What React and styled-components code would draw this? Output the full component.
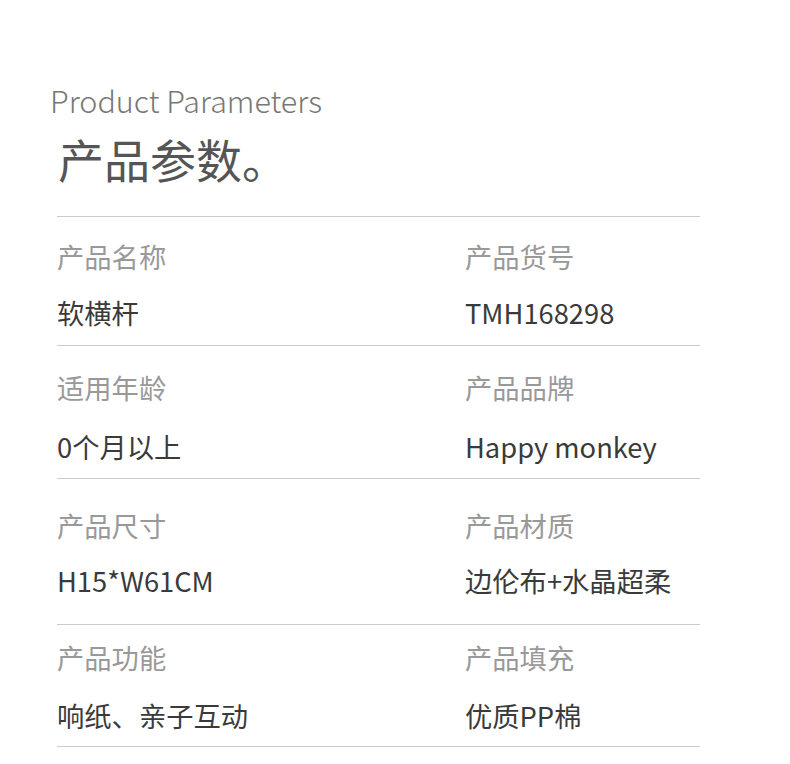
import React from 'react';
import styled, {createGlobalStyle} from "styled-components"

const GlobalStyle = createGlobalStyle`
    body {
        margin: 0;
        background: #fff;
        font-family: "Noto Sans CJK SC", "Noto Sans", sans-serif;
    }
`

const params = [
    {cells: [["产品名称", "软横杆"], ["产品货号", "TMH168298"]], top: 24, gap: 26, bottom: 18},
    {cells: [["适用年龄", "0个月以上"], ["产品品牌", "Happy monkey"]], top: 26, gap: 29, bottom: 17},
    {cells: [["产品尺寸", "H15*W61CM"], ["产品材质", "边伦布+水晶超柔"]], top: 31, gap: 25, bottom: 29},
    {cells: [["产品功能", "响纸、亲子互动"], ["产品填充", "优质PP棉"]], top: 17, gap: 28, bottom: 16},
]

const App = () => {
    return (
        <Page>
            <GlobalStyle />
            <Header>
                <EnTitle>Product Parameters</EnTitle>
                <CnTitle>产品参数。</CnTitle>
            </Header>
            <Table>
                {params.map((row, index) => (
                    <Row key={index} $top={row.top} $bottom={row.bottom}>
                        {row.cells.map(([label, value]) => (
                            <Cell key={label} $gap={row.gap}>
                                <Label>{label}</Label>
                                <Value>{value}</Value>
                            </Cell>
                        ))}
                    </Row>
                ))}
            </Table>
        </Page>
    );
}

const Page = styled.div`
    width: 790px;
    height: 764px;
    padding: 78px 0 0 50px;
    box-sizing: border-box;
    overflow: hidden;
`

const Header = styled.div`
    display: flex;
    flex-direction: column;
`

const EnTitle = styled.div`
    font-size: 30.5px;
    font-weight: 300;
    line-height: 44px;
    color: #777;
`

const CnTitle = styled.div`
    font-size: 46px;
    line-height: 72px;
    color: #555;
    margin-left: 8px;
`

const Table = styled.div`
    margin: 22px 0 0 7px;
    width: 643px;
    border-top: 1px solid #ccc;
`

const Row = styled.div`
    display: grid;
    grid-template-columns: 408px 1fr;
    padding: ${p => p.$top}px 0 ${p => p.$bottom}px;
    border-bottom: 1px solid #ccc;
`

const Cell = styled.div`
    display: flex;
    flex-direction: column;
    gap: ${p => p.$gap}px;
`

const Label = styled.div`
    font-size: 27.3px;
    line-height: 30px;
    color: #999;
`

const Value = styled.div`
    font-size: 27.3px;
    line-height: 30px;
    color: #3a3a3a;
`

export default App;
